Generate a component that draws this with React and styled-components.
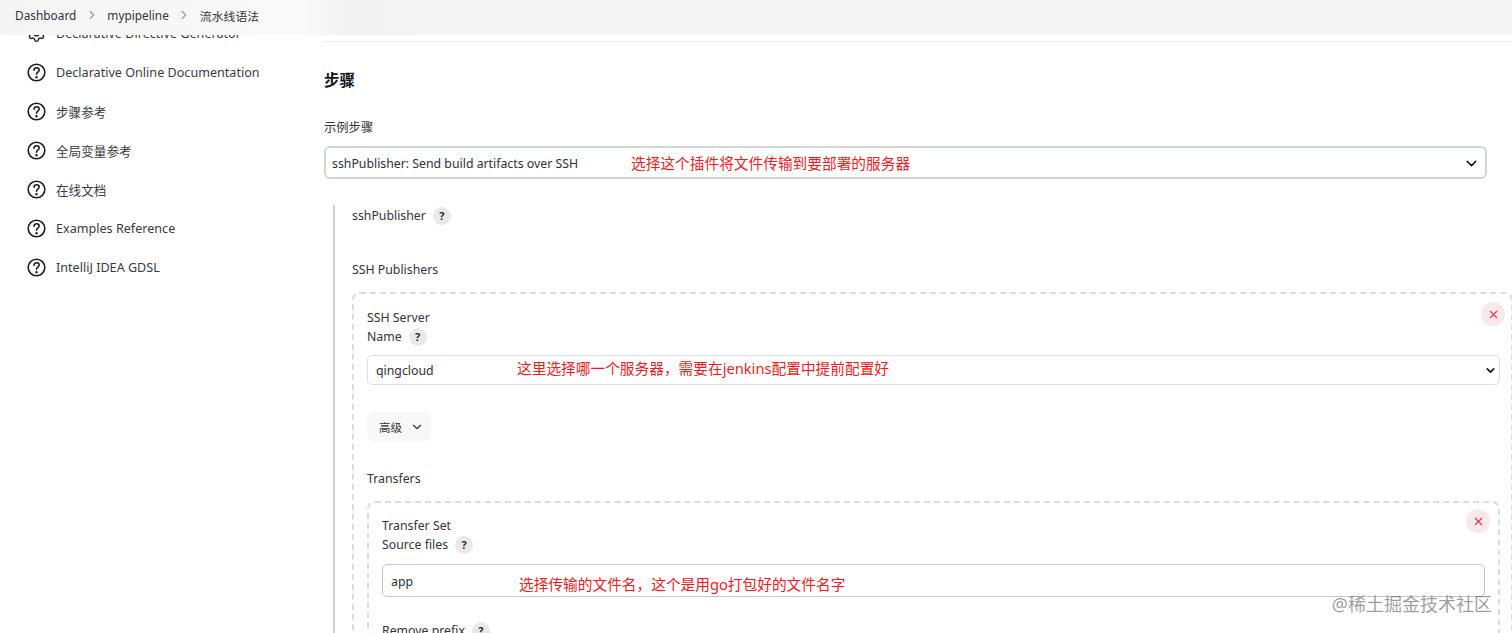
import React from 'react'
import styled, { createGlobalStyle } from 'styled-components'
import { Settings, ChevronDown, ChevronRight, X } from 'lucide-react'

const GlobalStyle = createGlobalStyle`
  html, body {
    margin: 0;
    height: 633px;
    overflow: hidden;
    background: #fff;
  }
  * { box-sizing: border-box; }
  body {
    font-family: "Noto Sans", "Noto Sans CJK SC", sans-serif;
    font-size: 12.3px;
    color: #2f2f38;
  }
`

const Page = styled.div`
  position: relative;
  display: flex;
  height: 633px;
  overflow: hidden;
`

const TopBar = styled.header`
  position: absolute;
  top: 0;
  left: 0;
  right: 0;
  height: 35px;
  display: flex;
  align-items: center;
  padding: 0 0 5px 15px;
  background: linear-gradient(90deg, #f5f5f6 0, #f9f9f9 300px, #f3f3f4 340px, #f5f5f6 100%);
  z-index: 2;
`

const Crumb = styled.span`
  font-size: 11.85px;
  color: #33333c;
`

const CrumbArrow = styled(ChevronRight)`
  width: 14px;
  height: 14px;
  margin: 0 8.5px;
  color: #9a9a9f;
`

const Sidebar = styled.nav`
  width: 324px;
  flex: none;
  padding: 14.4px 0 0 27px;
`

const SideItem = styled.a`
  display: flex;
  align-items: center;
  gap: 10px;
  height: 38.9px;
  font-size: 12.6px;
  color: #3a3a42;
`

const SideIcon = styled.svg`
  width: 19px;
  height: 19px;
  flex: none;
  color: #1c1c24;
`

const GearIcon = styled(Settings)`
  width: 19px;
  height: 19px;
  flex: none;
  color: #1c1c24;
`

const Main = styled.main`
  flex: 1;
  min-width: 0;
  padding: 41px 0 0;
`

const Rule = styled.div`
  height: 1px;
  background: #ededee;
`

const Heading = styled.h2`
  margin: 27px 0 0;
  font-size: 15.5px;
  line-height: 22px;
  font-weight: 700;
  color: #14141f;
`

const Label = styled.div`
  line-height: 19px;
  color: #33333c;
`

const StepLabel = styled(Label)`
  margin-top: 27px;
`

const StepSelect = styled.div`
  position: relative;
  width: 1163px;
  height: 33px;
  margin-top: 9px;
  display: flex;
  align-items: center;
  justify-content: space-between;
  padding: 2px 5px 0 6px;
  border: 2px solid #d2d5d6;
  border-radius: 6px;
  background: #fff;
`

const Note = styled.span`
  position: absolute;
  left: ${p => p.$left}px;
  top: ${p => p.$top}px;
  font-size: 14.7px;
  line-height: 20px;
  color: #ee1c25;
  white-space: nowrap;
`

const Nested = styled.div`
  margin: 26px 0 0 9px;
  padding: 1px 0 0 17px;
  border-left: 2px solid #cfcfd2;
  height: 500px;
`

const LabelRow = styled.div`
  display: flex;
  align-items: center;
  gap: 7px;
  height: 19px;
  color: #33333c;
`

const HelpBadge = styled.span`
  width: 18px;
  height: 18px;
  border-radius: 50%;
  background: #e9e9ea;
  display: flex;
  align-items: center;
  justify-content: center;
  font-size: 11px;
  font-weight: 700;
  color: #2b2b33;
`

const SectionLabel = styled(Label)`
  margin-top: ${p => p.$top}px;
`

const Repeatable = styled.div`
  position: relative;
  margin-top: ${p => p.$top}px;
  width: ${p => p.$width}px;
  padding: ${p => p.$padTop}px 13px 0;
  border: 2px dashed #dcdcde;
  border-radius: 8px;
  height: 400px;
`

const RepeatableTitle = styled.div`
  line-height: 18px;
  color: #33333c;
`

const CloseButton = styled.span`
  position: absolute;
  top: ${p => p.$top}px;
  right: ${p => p.$right}px;
  width: 24px;
  height: 24px;
  border-radius: 50%;
  background: #fbe8ea;
  display: flex;
  align-items: center;
  justify-content: center;
  color: #e0345a;
`

const FieldBox = styled.div`
  position: relative;
  width: ${p => p.$width}px;
  height: ${p => p.$height}px;
  margin-top: ${p => p.$top}px;
  display: flex;
  align-items: center;
  justify-content: space-between;
  padding: 1px ${p => p.$padRight}px 0 8px;
  border: ${p => p.$strong ? '1.5px solid #c3c7ca' : '1.5px solid #dedfe1'};
  border-radius: 5px;
  background: #fff;
`

const AdvancedButton = styled.button`
  display: flex;
  align-items: center;
  gap: 8px;
  width: 64px;
  height: 30px;
  margin-top: 27px;
  padding: 0 0 0 12px;
  border: 0;
  border-radius: 8px;
  background: #f8f8f9;
  font: inherit;
  font-size: 11.5px;
  color: #33333c;
`

const Watermark = styled.div`
  position: absolute;
  right: 20px;
  top: 591px;
  font-size: 18px;
  line-height: 26px;
  color: rgba(90, 90, 94, 0.6);
  z-index: 3;
`

const HelpIcon = () => (
  <SideIcon viewBox="0 0 24 24" fill="none" stroke="currentColor" strokeWidth="2" strokeLinecap="round">
    <circle cx="12" cy="12" r="10.5" />
    <path d="M8.8 9.2c.2-2 1.6-3.2 3.4-3.2 1.9 0 3.2 1.2 3.2 2.9 0 2.4-3.4 2.9-3.4 5.3" />
    <circle cx="12" cy="18" r=".6" fill="currentColor" />
  </SideIcon>
)

const sideItems = [
  'Declarative Online Documentation',
  '步骤参考',
  '全局变量参考',
  '在线文档',
  'Examples Reference',
  'IntelliJ IDEA GDSL',
]

const App = () => {
  return (
    <Page>
      <GlobalStyle />
      <TopBar>
        <Crumb>Dashboard</Crumb>
        <CrumbArrow />
        <Crumb>mypipeline</Crumb>
        <CrumbArrow />
        <Crumb>流水线语法</Crumb>
      </TopBar>

      <Sidebar>
        <SideItem>
          <GearIcon strokeWidth={1.8} />
          Declarative Directive Generator
        </SideItem>
        {sideItems.map(item => (
          <SideItem key={item}>
            <HelpIcon />
            {item}
          </SideItem>
        ))}
      </Sidebar>

      <Main>
        <Rule />
        <Heading>步骤</Heading>
        <StepLabel>示例步骤</StepLabel>
        <StepSelect>
          sshPublisher: Send build artifacts over SSH
          <ChevronDown size={17} strokeWidth={2} color="#14141f" />
          <Note $left={305} $top={5}>选择这个插件将文件传输到要部署的服务器</Note>
        </StepSelect>

        <Nested>
          <LabelRow>
            sshPublisher
            <HelpBadge>?</HelpBadge>
          </LabelRow>
          <SectionLabel $top={35}>SSH Publishers</SectionLabel>
          <Repeatable $top={13} $width={1161} $padTop={15}>
            <CloseButton $top={8} $right={6}><X size={13} /></CloseButton>
            <RepeatableTitle>SSH Server</RepeatableTitle>
            <LabelRow>
              Name
              <HelpBadge>?</HelpBadge>
            </LabelRow>
            <FieldBox $width={1133} $height={30} $top={9} $padRight={2}>
              qingcloud
              <ChevronDown size={13} strokeWidth={3} color="#14141f" />
              <Note $left={149} $top={2}>这里选择哪一个服务器，需要在jenkins配置中提前配置好</Note>
            </FieldBox>
            <AdvancedButton>
              高级
              <ChevronDown size={14} strokeWidth={2} />
            </AdvancedButton>
            <SectionLabel $top={27}>Transfers</SectionLabel>
            <Repeatable $top={13} $width={1133} $padTop={14}>
              <CloseButton $top={6} $right={8}><X size={13} /></CloseButton>
              <RepeatableTitle>Transfer Set</RepeatableTitle>
              <LabelRow>
                Source files
                <HelpBadge>?</HelpBadge>
              </LabelRow>
              <FieldBox $width={1103} $height={33} $top={10} $padRight={0} $strong>
                app
                <Note $left={136} $top={9}>选择传输的文件名，这个是用go打包好的文件名字</Note>
              </FieldBox>
              <SectionLabel $top={24}>
                <LabelRow>
                  Remove prefix
                  <HelpBadge>?</HelpBadge>
                </LabelRow>
              </SectionLabel>
            </Repeatable>
          </Repeatable>
        </Nested>
      </Main>

      <Watermark>@稀土掘金技术社区</Watermark>
    </Page>
  )
}

export default App
